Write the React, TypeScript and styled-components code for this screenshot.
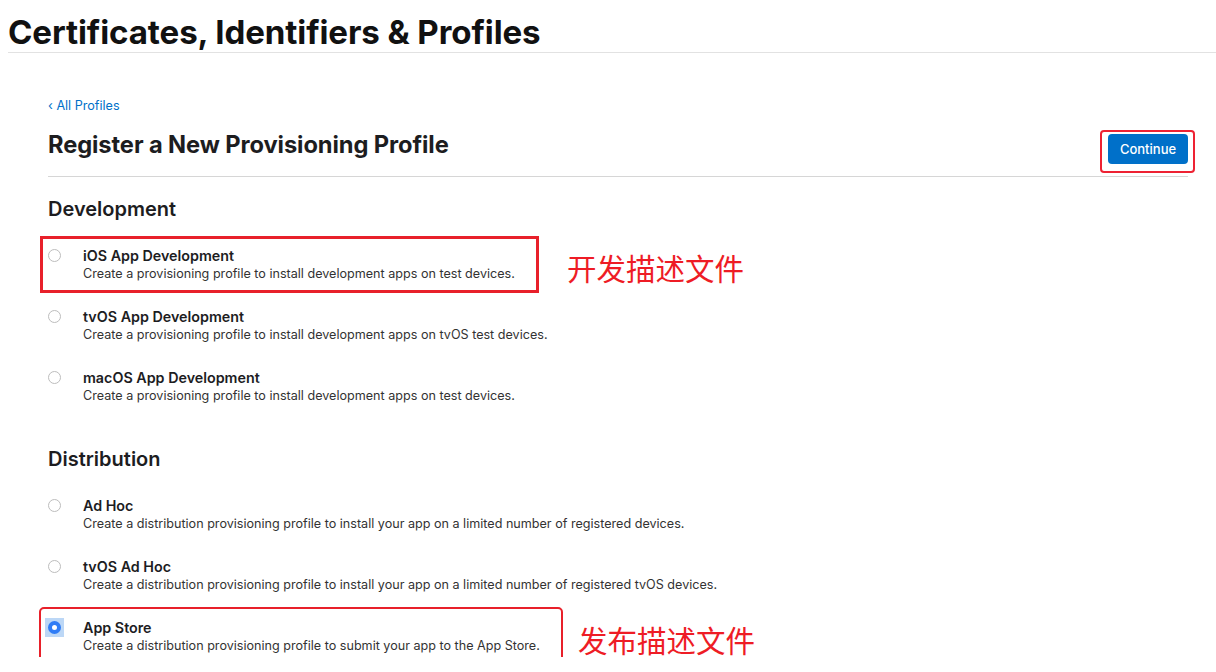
import styled, { createGlobalStyle } from 'styled-components';

const GlobalStyle = createGlobalStyle`
  body {
    margin: 0;
    background: #fff;
    font-family: Inter, "Noto Sans", "Noto Sans CJK SC", sans-serif;
    color: #1d1d1f;
  }
`;

const Header = styled.header`
  margin-left: 8px;
  height: 53px;
  border-bottom: 1px solid #e2e2e2;
  box-sizing: border-box;
`;

const SiteTitle = styled.h1`
  margin: 0;
  padding-top: 13px;
  font-size: 33.1px;
  line-height: 38px;
  font-weight: 700;
  letter-spacing: -0.1px;
  color: #111;
`;

const Main = styled.main`
  padding: 0 28px 0 48px;
`;

const BackLink = styled.a`
  display: block;
  margin-top: 45px;
  font-size: 12.6px;
  line-height: 16px;
  color: #0070c9;
  text-decoration: none;
`;

const TitleBar = styled.div`
  display: flex;
  align-items: flex-start;
  justify-content: space-between;
  height: 61px;
  padding-top: 15px;
  border-bottom: 1px solid #d6d6d6;
  box-sizing: border-box;
  margin-top: 2px;
`;

const PageTitle = styled.h2`
  margin: 0;
  font-size: 23.7px;
  line-height: 28px;
  font-weight: 700;
  letter-spacing: -0.1px;
  color: #1d1d1f;
`;

const Marked = styled.div`
  position: relative;
  margin-top: 3px;
  &::before {
    content: '';
    position: absolute;
    left: -8px;
    right: -7px;
    top: -4px;
    bottom: -9px;
    border: 2px solid #ee2233;
    border-radius: 4px;
  }
`;

const ContinueButton = styled.button`
  display: block;
  width: 80px;
  height: 30px;
  border: none;
  border-radius: 4px;
  background: #0070c9;
  color: #fff;
  font-family: inherit;
  font-size: 13px;
  font-weight: 500;
`;

const SectionTitle = styled.h3<{ $top: number }>`
  margin: ${(p) => p.$top}px 0 0;
  font-size: 20px;
  line-height: 24px;
  font-weight: 600;
  color: #1d1d1f;
`;

const OptionList = styled.div<{ $top: number }>`
  display: flex;
  flex-direction: column;
  gap: 23px;
  margin-top: ${(p) => p.$top}px;
`;

const Option = styled.label<{ $box?: 'square' | 'round' }>`
  position: relative;
  display: flex;
  align-items: flex-start;
  gap: 22px;
  height: 38px;
  &::before {
    content: '';
    display: ${(p) => (p.$box ? 'block' : 'none')};
    position: absolute;
    left: ${(p) => (p.$box === 'round' ? '-9px' : '-8px')};
    top: ${(p) => (p.$box === 'round' ? '-12px' : '-11px')};
    width: ${(p) => (p.$box === 'round' ? '524px' : '499px')};
    height: ${(p) => (p.$box === 'round' ? '55px' : '57px')};
    box-sizing: border-box;
    border: ${(p) => (p.$box === 'round' ? '2px' : '3px')} solid #e8202a;
    border-radius: ${(p) => (p.$box === 'round' ? '5px' : '0')};
    pointer-events: none;
  }
`;

const Radio = styled.span<{ $checked?: boolean }>`
  flex: none;
  width: 13px;
  height: 13px;
  margin-top: 2px;
  border-radius: 50%;
  box-sizing: border-box;
  border: 1px solid #bdbdbd;
  background: #fff;
  position: relative;
  ${(p) =>
    p.$checked &&
    `
    border: 4px solid #2f7cf6;
    &::before {
      content: '';
      position: absolute;
      left: -7px;
      top: -7px;
      width: 19px;
      height: 19px;
      background: #bcd7f6;
      z-index: -1;
    }
  `}
`;

const OptionText = styled.div`
  display: flex;
  flex-direction: column;
`;

const OptionName = styled.span`
  font-size: 14.3px;
  line-height: 18px;
  font-weight: 600;
  color: #1d1d1f;
`;

const OptionDesc = styled.span`
  font-size: 12.6px;
  line-height: 18px;
  color: #333;
`;

const Note = styled.span<{ $left: number }>`
  position: absolute;
  left: ${(p) => p.$left}px;
  top: 2px;
  font-family: "Noto Sans CJK SC", sans-serif;
  font-size: 29.5px;
  line-height: 36px;
  color: #ee1c25;
  white-space: nowrap;
`;

type Item = { name: string; desc: string; box?: 'square' | 'round'; note?: string; noteLeft?: number; checked?: boolean };

const development: Item[] = [
  {
    name: 'iOS App Development',
    desc: 'Create a provisioning profile to install development apps on test devices.',
    box: 'square',
    note: '开发描述文件',
    noteLeft: 519,
  },
  {
    name: 'tvOS App Development',
    desc: 'Create a provisioning profile to install development apps on tvOS test devices.',
  },
  {
    name: 'macOS App Development',
    desc: 'Create a provisioning profile to install development apps on test devices.',
  },
];

const distribution: Item[] = [
  {
    name: 'Ad Hoc',
    desc: 'Create a distribution provisioning profile to install your app on a limited number of registered devices.',
  },
  {
    name: 'tvOS Ad Hoc',
    desc: 'Create a distribution provisioning profile to install your app on a limited number of registered tvOS devices.',
  },
  {
    name: 'App Store',
    desc: 'Create a distribution provisioning profile to submit your app to the App Store.',
    box: 'round',
    note: '发布描述文件',
    noteLeft: 530,
    checked: true,
  },
];

function Options({ items, top }: { items: Item[]; top: number }) {
  return (
    <OptionList $top={top}>
      {items.map((item) => (
        <Option key={item.name} $box={item.box}>
          <Radio $checked={item.checked} />
          <OptionText>
            <OptionName>{item.name}</OptionName>
            <OptionDesc>{item.desc}</OptionDesc>
          </OptionText>
          {item.note && <Note $left={item.noteLeft ?? 0}>{item.note}</Note>}
        </Option>
      ))}
    </OptionList>
  );
}

export default function App() {
  return (
    <>
      <GlobalStyle />
      <Header>
        <SiteTitle>Certificates, Identifiers &amp; Profiles</SiteTitle>
      </Header>
      <Main>
        <BackLink href="#">‹ All Profiles</BackLink>
        <TitleBar>
          <PageTitle>Register a New Provisioning Profile</PageTitle>
          <Marked>
            <ContinueButton>Continue</ContinueButton>
          </Marked>
        </TitleBar>
        <SectionTitle $top={20}>Development</SectionTitle>
        <Options items={development} top={26} />
        <SectionTitle $top={40}>Distribution</SectionTitle>
        <Options items={distribution} top={26} />
      </Main>
    </>
  );
}
